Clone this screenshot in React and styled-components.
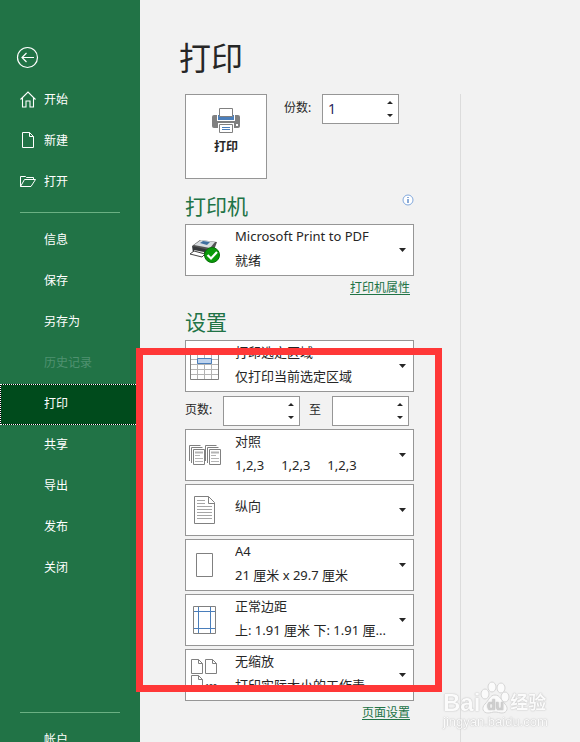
import React from "react";
import styled, { createGlobalStyle, ThemeProvider } from "styled-components";

const theme = {
  green: "#217346",
  greenDark: "#004b1c",
  greenLine: "#6bb083",
  page: "#f2f2f2",
  border: "#969696",
  text: "#262626",
  red: "#ff3838",
  font: `"Noto Sans", "Noto Sans CJK SC", sans-serif`
};

const GlobalStyle = createGlobalStyle`
  * {
    box-sizing: border-box;
  }

  body {
    margin: 0;
    background: ${theme.page};
    color: ${theme.text};
    font-family: ${theme.font};
    font-size: 13px;
  }

  button,
  input,
  select {
    font: inherit;
    color: inherit;
  }
`;

const Page = styled.div`
  display: flex;
  min-height: 100vh;
`;

const Sidebar = styled.nav`
  display: flex;
  flex-direction: column;
  flex: 0 0 140px;
  height: 100vh;
  padding-top: 46px;
  overflow: hidden;
  background: ${props => props.theme.green};
  color: #fff;
`;

const BackButton = styled.button`
  display: flex;
  flex: none;
  width: 24px;
  height: 24px;
  margin: 0 0 10px 16px;
  padding: 0;
  border: 0;
  background: none;
  color: #fff;
`;

const NavItem = styled.button`
  display: grid;
  grid-template-columns: 25px 1fr;
  align-items: center;
  flex: none;
  width: 100%;
  height: 41px;
  padding: 0 0 3px 18px;
  border: 1px ${props => (props.$active ? "dotted #fff" : "solid transparent")};
  background: ${props =>
    props.$active
      ? `linear-gradient(${props.theme.greenDark}, ${props.theme.greenDark}) padding-box, #000 border-box`
      : "none"};
  color: #fff;
  font-size: 12px;
  text-align: left;

  &:disabled {
    color: #4f9170;
  }

  span {
    grid-column: 2;
  }
`;

const Divider = styled.hr`
  flex: none;
  width: 100px;
  height: 1px;
  margin: ${props => (props.$footer ? "0 0 7px 20px" : "9px 0 7px 20px")};
  border: 0;
  background: ${props => props.theme.greenLine};
`;

const SidebarFooter = styled.div`
  flex: none;
  height: 30px;
  margin-top: auto;
`;

const Panel = styled.main`
  flex: 0 0 320px;
  padding: 36px 46px 0 45px;
`;

const Title = styled.h1`
  margin: 0 0 14px -6px;
  font-size: 32px;
  font-weight: 400;
  line-height: 44px;
`;

const PrintRow = styled.div`
  display: flex;
  align-items: flex-start;
  gap: 17px;
`;

const PrintButton = styled.button`
  display: flex;
  flex-direction: column;
  align-items: center;
  gap: 2px;
  width: 82px;
  height: 85px;
  padding: 12px 0 0;
  border: 1px solid ${props => props.theme.border};
  background: #fff;
  font-size: 12px;
  font-weight: 600;
`;

const Field = styled.label`
  display: grid;
  grid-template-columns: ${props => (props.$short ? "23px" : "38px")} 77px;
  align-items: center;
  font-size: 12px;
  line-height: 28px;

  > :first-child {
    align-self: start;
  }
`;

const SpinBox = styled.span`
  display: flex;
  justify-content: space-between;
  height: 30px;
  border: 1px solid ${props => props.theme.border};
  background: #fff;

  input {
    width: 52px;
    padding: 0 0 0 5px;
    border: 0;
    outline: 0;
    background: none;
    color: #2b1f5c;
    font-size: 14px;
    appearance: textfield;
  }

  input::-webkit-inner-spin-button {
    display: none;
  }

  svg {
    margin: 5px 5px 0 0;
  }
`;

const SectionHead = styled.div`
  display: flex;
  justify-content: space-between;
  height: 34px;
  margin-top: ${props => (props.$tight ? "6px" : "11px")};

  h2 {
    margin: 0;
    color: ${props => props.theme.green};
    font-size: 21px;
    font-weight: 400;
    line-height: 32px;
  }
`;

const InfoButton = styled.button`
  display: flex;
  align-self: flex-start;
  margin-top: 4px;
  padding: 0;
  border: 0;
  background: none;
`;

const Picker = styled.div`
  display: grid;
  grid-template: 24px 24px / 40px 1fr 22px;
  height: 52px;
  padding: 2px 0;

  > * {
    pointer-events: none;
  }

  select {
    grid-area: 1 / 1 / -1 / -1;
    height: 52px;
    margin: -2px 0;
    padding: ${props => (props.$single ? "0 22px 8px 49px" : "0 22px 29px 49px")};
    border: 1px solid ${props => props.theme.border};
    border-radius: 0;
    background: #fff;
    appearance: none;
    pointer-events: auto;
  }

  .icon {
    grid-area: 1 / 1 / 3 / 2;
    display: flex;
    align-items: center;
    justify-content: center;
  }

  .detail {
    grid-area: 2 / 2;
    padding-left: 10px;
    line-height: 20px;
    white-space: pre;
    overflow: hidden;
    text-overflow: ellipsis;
  }

  .arrow {
    grid-area: 1 / 3 / 3 / 4;
    align-self: center;
    justify-self: center;
  }
`;

const LinkRow = styled.div`
  display: flex;
  justify-content: flex-end;
  padding-right: 4px;

  a {
    color: ${props => props.theme.green};
    font-size: 12px;
    line-height: 24px;
    text-underline-offset: 2px;
  }
`;

const SettingsList = styled.div`
  position: relative;
  display: flex;
  flex-direction: column;
  gap: 3px;
`;

const PageRange = styled.div`
  display: flex;
  align-items: flex-end;
  gap: 9px;
  height: 31px;
`;

const Highlight = styled.div`
  position: absolute;
  inset: 8px -28px 9px -49px;
  border: 7px solid ${props => props.theme.red};
  pointer-events: none;
`;

const Preview = styled.aside`
  flex: 1;
  margin-top: 94px;
  border-left: 1px solid #dcdcdc;
`;

const Watermark = styled.div`
  position: fixed;
  right: 32px;
  bottom: 13px;
  width: 105px;
  color: #fbfbfb;
  text-shadow: 0 0 1px #b4b4b4, 0 0 2px #ccc;
  font-family: "Liberation Sans", "Noto Sans CJK SC", sans-serif;
  pointer-events: none;

  .logo {
    display: flex;
    align-items: flex-end;
    height: 34px;
    font-size: 24px;
    font-weight: 700;
    line-height: 24px;
  }

  .logo span:last-child {
    font-size: 18px;
  }

  .site {
    font-size: 13px;
    line-height: 14px;
  }
`;

const BackIcon = () => (
  <svg width="24" height="24" fill="none" stroke="currentColor" strokeWidth="1.2">
    <circle cx="11.5" cy="11.5" r="10" />
    <path d="M18 11.5H6M10.5 7L6 11.5l4.500 4.500" />
  </svg>
);

const HomeIcon = () => (
  <svg width="18" height="18" fill="none" stroke="currentColor" strokeWidth="1.1">
    <path d="M1.500 9.500L9 2l7.500 7.500M3.500 8v9h3.500v-6h4v6h3.500v-9" />
  </svg>
);

const NewIcon = () => (
  <svg width="18" height="18" fill="none" stroke="currentColor">
    <path d="M3.500 1.500h7l4 4v11h-11zM10.500 1.500v4h4" />
  </svg>
);

const OpenIcon = () => (
  <svg width="18" height="18" fill="none" stroke="currentColor">
    <path d="M1.500 14.500v-10h5l1 1h7v2M1.500 14.500l4-7h11l-4.500 7z" />
  </svg>
);

const PrinterIcon = () => (
  <svg width="28" height="28">
    <rect y="8" width="28" height="13" rx="2" fill="#808080" />
    <path d="M5 7h18v7H5z" fill="#fff" />
    <path d="M6 8h16v5H6z" fill="#4a7ebb" />
    <path d="M7.500 1.500h13v8h-13z" fill="#fff" stroke="#808080" />
    <path d="M6 16h16v5H6z" fill="#fff" />
    <path d="M7.500 17.500h13v8h-13z" fill="#fff" stroke="#808080" />
    <path d="M10 20.500h8M10 22.500h8" stroke="#4a7ebb" />
    <rect x="24" y="17" width="2" height="2" fill="#fff" />
  </svg>
);

const SpinArrows = () => (
  <svg width="6" height="18" fill="#262626">
    <path d="M0 4l3-3 3 3zM0 14l3 3 3-3z" />
  </svg>
);

const Arrow = () => (
  <svg className="arrow" width="8" height="4" fill="#262626">
    <path d="M0 0h7L3.500 4z" />
  </svg>
);

const InfoIcon = () => (
  <svg width="12" height="12" fill="none">
    <circle cx="6" cy="6" r="5" fill="#fff" stroke="#82a9dd" />
    <path d="M6 5v4M6 3v1" stroke="#3f74bd" strokeWidth="1.2" />
  </svg>
);

const ReadyPrinterIcon = () => (
  <svg width="32" height="28">
    <path d="M3 10l8-6 17 2-3 8-12 2z" fill="#555" />
    <path d="M5 9l7-5 14 2-5 6z" fill="#d9dde0" />
    <path d="M11 7l3-2 7 1-3 3z" fill="#3f6f9f" />
    <path d="M3 10l17 4v7L4 17z" fill="#35383b" />
    <path d="M5 14l10 2v2L5 16z" fill="#eee" />
    <path d="M1 18l4-3 11 3-3 3z" fill="#fff" stroke="#444" />
    <circle cx="23" cy="19" r="7.500" fill="#0a9a0a" stroke="#087008" />
    <path d="M18.500 19l3.500 3.500 6-6.500" fill="none" stroke="#fff" strokeWidth="2.2" />
  </svg>
);

const SelectionIcon = () => (
  <svg width="30" height="30" fill="none">
    <path d="M1.500 1.500h28v27h-28z" fill="#fff" />
    <path
      d="M7.500 1v27M14.500 1v27M21.500 1v27M1 3.500h28M1 8.500h28M1 13.500h28M1 18.500h28M1 23.500h28"
      stroke="#b4b4b4"
    />
    <path d="M.500 .500h28v28H.500z" stroke="#808080" />
    <path d="M7.500 7.500h14v5h-14z" fill="#bdd3ee" stroke="#4a7ebb" />
  </svg>
);

const Stack = ({ x }) => (
  <g transform={`translate(${x} 0)`}>
    <path d="M.500 16V.500h11M2.500 18V2.500h11" stroke="#808080" />
    <path d="M4.500 4.500h11v15h-11z" fill="#fff" stroke="#808080" />
    <path d="M6 7.500h8" stroke="#b4b4b4" strokeWidth="2" />
    <path d="M6 10.500h5M6 13.500h8M6 16.500h8" stroke="#b4b4b4" />
  </g>
);

const CollateIcon = () => (
  <svg width="32" height="20" fill="none">
    <Stack x={0} />
    <Stack x={16} />
  </svg>
);

const PortraitIcon = () => (
  <svg width="22" height="28" fill="none">
    <path d="M.500 .500h14l6 6v21H.500zM14.500 .500v7h6" stroke="#808080" />
    <path
      d="M3 4.500h8M3 7.500h8M3 10.500h15M3 13.500h15M3 16.500h15M3 19.500h15M3 22.500h15"
      stroke="#a6a6a6"
    />
  </svg>
);

const PaperIcon = () => (
  <svg width="18" height="24" fill="none">
    <path d="M.500 .500h16v23H.500z" stroke="#808080" />
  </svg>
);

const MarginsIcon = () => (
  <svg width="24" height="28" fill="none">
    <path d="M5.500 1v26M17.500 1v26M1 5.500h21M1 22.500h21" stroke="#4a7ebb" />
    <path d="M.500 .500h22v27H.500z" stroke="#808080" />
  </svg>
);

const ScalingIcon = () => (
  <svg width="28" height="32" fill="none" stroke="#808080">
    <path d="M.500 .500h7l4 4v10H.500zM7.500 .500v4h4" />
    <path d="M14.500 .500h7l4 4v10h-11zM21.500 .500v4h4" />
    <path d="M.500 16.500h7l4 4v10H.500zM7.500 16.500v4h4" />
    <text x="14" y="30" fill="#444" stroke="none" fontSize="7" fontWeight="700">
      100
    </text>
  </svg>
);

const PawIcon = () => (
  <svg width="30" height="34" fill="#fbfbfb" stroke="#d4d4d4">
    <ellipse cx="5" cy="13" rx="4" ry="5" />
    <ellipse cx="12" cy="6" rx="4" ry="5" />
    <ellipse cx="21" cy="7" rx="4" ry="5" />
    <ellipse cx="25" cy="16" rx="4" ry="5" />
    <path d="M15 14c5 0 6 5 10 9s2 9-3 9c-3 0-4-1-7-1s-4 1-7 1c-5 0-7-5-3-9s5-9 10-9z" />
    <text x="7" y="29" fill="#cfcfcf" stroke="none" fontSize="14" fontWeight="700">
      du
    </text>
  </svg>
);

const topItems = [
  { label: "开始", Icon: HomeIcon },
  { label: "新建", Icon: NewIcon },
  { label: "打开", Icon: OpenIcon }
];

const fileItems = [
  { label: "信息" },
  { label: "保存" },
  { label: "另存为" },
  { label: "历史记录", disabled: true },
  { label: "打印", active: true },
  { label: "共享" },
  { label: "导出" },
  { label: "发布" },
  { label: "关闭" }
];

const pageSettings = [
  { name: "对照", title: "对照", detail: "1,2,3     1,2,3     1,2,3", Icon: CollateIcon },
  { name: "方向", title: "纵向", Icon: PortraitIcon },
  { name: "纸张", title: "A4", detail: "21 厘米 x 29.7 厘米", Icon: PaperIcon },
  {
    name: "边距",
    title: "正常边距",
    detail: "上: 1.91 厘米 下: 1.91 厘...",
    Icon: MarginsIcon
  },
  { name: "缩放", title: "无缩放", detail: "打印实际大小的工作表", Icon: ScalingIcon }
];

function Option({ name, title, detail, Icon }) {
  return (
    <Picker $single={!detail}>
      <select aria-label={name}>
        <option>{title}</option>
      </select>
      <span className="icon">
        <Icon />
      </span>
      {detail && <span className="detail">{detail}</span>}
      <Arrow />
    </Picker>
  );
}

function NumberField({ label, value, short }) {
  return (
    <Field $short={short}>
      <span>{label}</span>
      <SpinBox>
        <input type="number" min="1" defaultValue={value} />
        <SpinArrows />
      </SpinBox>
    </Field>
  );
}

function App() {
  return (
    <ThemeProvider theme={theme}>
      <GlobalStyle />
      <Page>
        <Sidebar>
          <BackButton aria-label="返回">
            <BackIcon />
          </BackButton>
          {topItems.map(({ label, Icon }) => (
            <NavItem key={label}>
              <Icon />
              <span>{label}</span>
            </NavItem>
          ))}
          <Divider />
          {fileItems.map(item => (
            <NavItem key={item.label} $active={item.active} disabled={item.disabled}>
              <span>{item.label}</span>
            </NavItem>
          ))}
          <SidebarFooter>
            <Divider $footer />
            <NavItem>
              <span>帐户</span>
            </NavItem>
          </SidebarFooter>
        </Sidebar>

        <Panel>
          <Title>打印</Title>
          <PrintRow>
            <PrintButton>
              <PrinterIcon />
              打印
            </PrintButton>
            <NumberField label="份数:" value="1" />
          </PrintRow>

          <SectionHead>
            <h2>打印机</h2>
            <InfoButton aria-label="打印机信息">
              <InfoIcon />
            </InfoButton>
          </SectionHead>
          <Option
            name="打印机"
            title="Microsoft Print to PDF"
            detail="就绪"
            Icon={ReadyPrinterIcon}
          />
          <LinkRow>
            <a href="#printer">打印机属性</a>
          </LinkRow>

          <SectionHead $tight>
            <h2>设置</h2>
          </SectionHead>
          <SettingsList>
            <Option
              name="打印范围"
              title="打印选定区域"
              detail="仅打印当前选定区域"
              Icon={SelectionIcon}
            />
            <PageRange>
              <NumberField label="页数:" />
              <NumberField label="至" short />
            </PageRange>
            {pageSettings.map(setting => (
              <Option key={setting.name} {...setting} />
            ))}
            <Highlight />
          </SettingsList>
          <LinkRow>
            <a href="#page-setup">页面设置</a>
          </LinkRow>
        </Panel>

        <Preview />
      </Page>

      <Watermark>
        <div className="logo">
          <span>Bai</span>
          <PawIcon />
          <span>经验</span>
        </div>
        <div className="site">jingyan.baidu.com</div>
      </Watermark>
    </ThemeProvider>
  );
}
export default App;
